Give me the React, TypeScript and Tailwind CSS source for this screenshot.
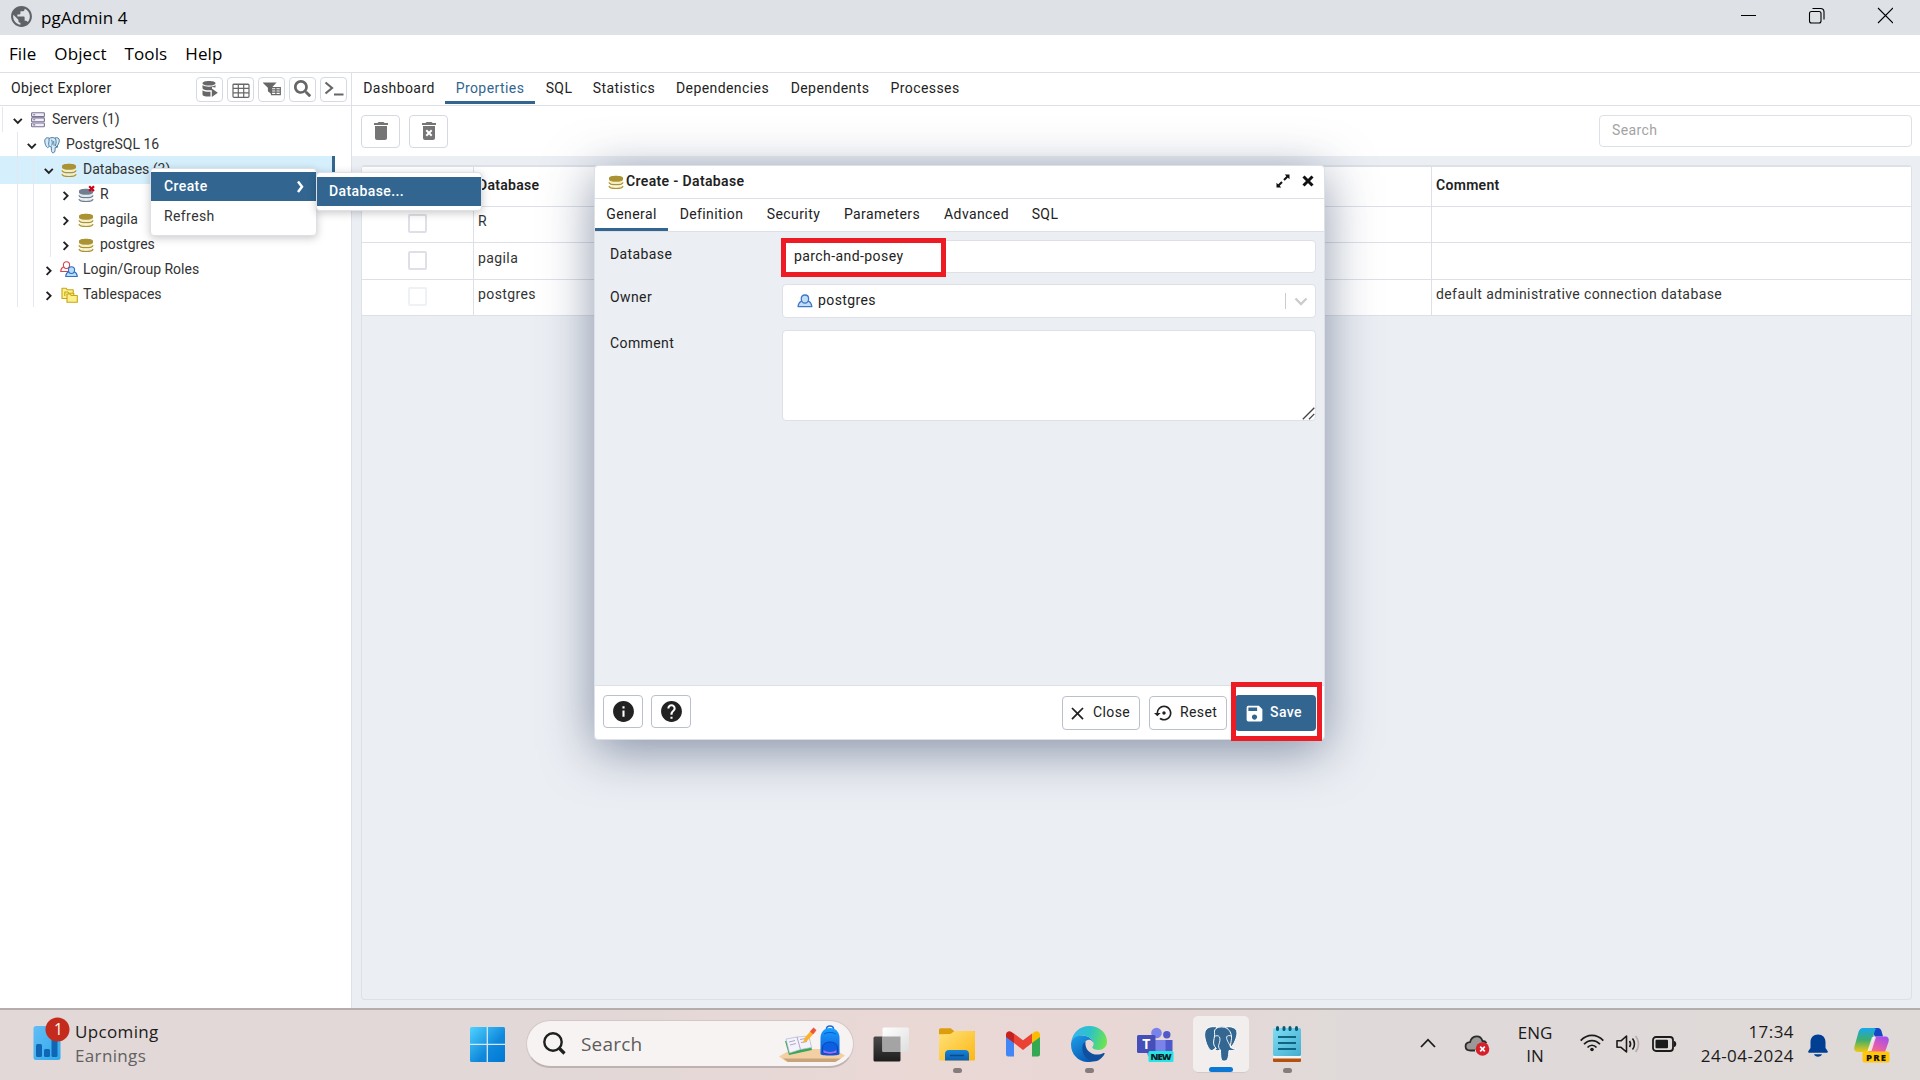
import React from "react";
import { MdDelete, MdHelp, MdInfo, MdPublic, MdSave, MdSettingsBackupRestore, MdClose } from "react-icons/md";
import { FaSearch } from "react-icons/fa";

/* ---------- small icons ---------- */

function DbIcon({ dark = "#ab9333", light = "#f5eec0", size = 16, gone = false }) {
  return (
    <svg className="overflow-visible" width={size} height={size} viewBox="0 0 16 16" fill="none">
      <path d="M1.2 10.8v1.9c0 1.2 3 2.2 6.8 2.2s6.8-1 6.8-2.2v-1.9c-1 1.2-3.600 1.700-6.800 1.700s-5.800-.5-6.800-1.700Z" fill={light} />
      <path d="M1.200 6.600v2.200C1.200 10 4.200 11 8 11s6.800-1 6.800-2.200V6.600C13.800 7.800 11.200 8.300 8 8.300S2.200 7.800 1.200 6.600Z" fill={light} />
      <path d="M.9 8.300C1.300 9.800 4.200 10.700 8 10.700s6.700-.9 7.100-2.400M.9 12.100c.4 1.500 3.300 2.400 7.100 2.400s6.700-.9 7.100-2.400" stroke={dark} strokeWidth="1.200" />
      <path d="M1 4v1.500C1 6.900 4.100 7.800 8 7.800s7-.9 7-2.300V4c0-1.400-3.100-2.300-7-2.300S1 2.600 1 4Z" fill={dark} />
      {gone && <path d="m11.200-.8 4.800 4.800m0-4.800-4.800 4.800" stroke="#d0021b" strokeWidth="2.200" />}
    </svg>
  );
}

function ServersIcon() {
  return (
    <svg width="16" height="16" viewBox="0 0 16 16" fill="none" stroke="#7a7194" strokeWidth="1.100">
      <rect x="1.600" y=".8" width="12.800" height="3.800" rx=".8" fill="#f0eef6" />
      <rect x="1.600" y="5.900" width="12.800" height="3.800" rx=".8" fill="#f0eef6" />
      <rect x="1.600" y="11" width="12.800" height="3.800" rx=".8" fill="#f0eef6" />
      <path d="M3.200 2.700h2M3.200 7.800h2M3.200 12.900h2" />
    </svg>
  );
}

function ElephantIcon() {
  return (
    <svg width="17" height="18" viewBox="0 0 17 18" fill="#d3eaf8" stroke="#336791" strokeWidth=".9" strokeLinejoin="round">
      <path d="M5.500 1.800C3.500.6.8 1.600.8 4.600c0 3 1.700 7.200 3.200 7.200.9 0 1.500-1.400 1.500-1.400" />
      <path d="M11.600 1.600c2.200-1 4.700 0 4.700 2.500 0 2.600-1.900 6.200-3.300 6.800" />
      <path d="M5.300 2.200C7 .8 10.200.7 12 2c1.200 2.200 1 5 .3 7-.5 1.500 1.200 2 2.600 1.700-.8 1-2.300 1.200-3 .9 0 2.600-.2 5.300-1.600 5.600-1.700.4-2.300-.8-2.400-2.500l-.2-4c-1.500.4-2.600-.5-2.700-2.500-.1-2 .7-3 .3-6Z" />
      <path d="M8 3.500c1 1.700 1 4 .2 6M10.400 4.800c-.5 1.500.5 3.200.3 5" fill="none" />
    </svg>
  );
}

function PersonShape({ x, y, fill, stroke }: { x: number; y: number; fill: string; stroke: string }) {
  return (
    <g transform={`translate(${x} ${y})`} fill={fill} stroke={stroke} strokeWidth="1.100" strokeLinejoin="round">
      <path d="M3.800 5.800C2 6.400.9 8 .7 10.500h11.600c-.2-2.500-1.300-4.100-3.100-4.700" />
      <path d="M6.500.7c2 0 3.100 1.200 3.100 3.100 0 2-1.300 3.700-3.100 3.700S3.400 5.800 3.400 3.800C3.400 1.900 4.500.7 6.500.7Z" />
    </g>
  );
}

function RolesIcon() {
  return (
    <svg className="shrink-0" width="18" height="17" viewBox="0 0 18 17">
      <PersonShape x={0} y={0} fill="#fff" stroke="#d0454c" />
      <PersonShape x={5} y={5} fill="#b7dcf5" stroke="#2f6fc4" />
    </svg>
  );
}

function UserIcon() {
  return (
    <svg width="16" height="14" viewBox="0 0 13.500 11.500">
      <PersonShape x={0.200} y={0} fill="#c3def4" stroke="#3c78c8" />
    </svg>
  );
}

function TablespaceIcon() {
  return (
    <svg className="shrink-0" width="17" height="16" viewBox="0 0 17 16" fill="#fbf08b" stroke="#c9a415" strokeWidth="1.100" strokeLinejoin="round">
      <path d="M1 11.500V1.200h4.200l1 1.500h6v8.800Z" />
      <path d="M3.800 9V5h3l1 1.200h5V9" />
      <path d="M6 15.200V7h3.300l1 1.500h6v6.700Z" />
    </svg>
  );
}

function Chevron({ open = false }: { open?: boolean }) {
  return (
    <svg width="16" height="16" viewBox="0 0 16 16" fill="none" stroke="#222" strokeWidth="1.900">
      {open ? <path d="m3.800 5.800 4 4 4-4" /> : <path d="m5.600 3.800 4 4-4 4" />}
    </svg>
  );
}

function TrashX() {
  return (
    <svg width="24" height="24" viewBox="0 0 24 24" fill="#757575">
      <path d="M6 19c0 1.100.9 2 2 2h8c1.100 0 2-.9 2-2V7H6ZM19 4h-3.500l-1-1h-5l-1 1H5v2h14Z" />
      <path d="m9.300 11.300 5.400 5.400m0-5.400-5.400 5.400" stroke="#fff" strokeWidth="2" />
    </svg>
  );
}

/* ---------- object explorer ---------- */

const headerIcons = [
  <svg width="18" height="18" viewBox="0 0 18 18" fill="#666">
    <path d="M1.500 3.200C1.500 1.800 4.500 1 8 1s6.500.8 6.500 2.200S11.500 5.500 8 5.500 1.500 4.600 1.500 3.200Z" />
    <path d="M1.500 5c1.200 1.200 3.600 1.700 6.500 1.700s5.300-.5 6.500-1.700v2.400L11 6.900v3.300c-4.500.5-9.500-.1-9.500-2.200ZM1.500 10.300C3 11.500 6 12 9.500 11.800v4.600c-4.500.4-8-.4-8-2Z" />
    <path d="m10.800 8.500 6 4.200-6 4.300Z" />
  </svg>,
  <svg className="mt-px" width="18" height="16" viewBox="0 0 18 16" fill="none" stroke="#666" strokeWidth="1.200">
    <rect x="1" y="2" width="16" height="13.300" rx="1" />
    <path d="M1 6.300h16M1 10.800h16M6.300 2v13M11.700 2v13M1 2.500h16" />
  </svg>,
  <svg width="18" height="16" viewBox="0 0 18 16" fill="none" stroke="#666" strokeWidth="1.200">
    <path d="M.8 2h11.400L8 6.500V12L5.500 10V6.500Z" fill="#666" />
    <path d="M8.500 6.600h8.800v7H8.500ZM8.500 8.800h8.800M8.500 11.200h8.800M12.900 6.600v7" fill="#fff" />
  </svg>,
  <FaSearch className="mb-[2px]" size={17} color="#666" />,
  <svg width="20" height="16" viewBox="0 0 20 16" fill="none" stroke="#666" strokeWidth="2.200">
    <path d="m1.500 1.500 6.500 5.500-6.500 5.500M10 13.500h9.500" />
  </svg>,
];

type Node = { label: string; level: number; icon: React.ReactNode; open?: boolean; selected?: boolean };

const nodes: Node[] = [
  { label: "Servers (1)", level: 0, icon: <ServersIcon />, open: true },
  { label: "PostgreSQL 16", level: 1, icon: <ElephantIcon />, open: true },
  { label: "Databases (3)", level: 2, icon: <DbIcon />, open: true, selected: true },
  { label: "R", level: 3, icon: <DbIcon dark="#6f7f8f" light="#e3e8ee" gone /> },
  { label: "pagila", level: 3, icon: <DbIcon /> },
  { label: "postgres", level: 3, icon: <DbIcon /> },
  { label: "Login/Group Roles", level: 2, icon: <RolesIcon /> },
  { label: "Tablespaces", level: 2, icon: <TablespaceIcon /> },
];

const indents = ["pl-[10px]", "pl-[24px]", "pl-[41px]", "pl-[58px]"];
const guides = ["left-[2px]", "left-[17px]", "left-[33px]", "left-[50px]"];

function Tree() {
  return (
    <div className="flex flex-col pt-px">
      {nodes.map((n) => (
        <div
          key={n.label}
          className={`relative flex items-center gap-[5px] ${indents[n.level]} ${
            n.selected ? "z-0 -mt-px -mb-[2px] mr-4 h-[28px] border-r-[3px] border-[#326690] bg-[#d6effc] pb-px" : "h-[25px]"
          }`}
        >
          {guides.slice(n.level === 0 ? 0 : 1, n.level + 1).map((g) => (
            <span key={g} className={`absolute inset-y-0 w-px bg-[#e4e7ee] ${g}`} />
          ))}
          <span className="relative top-px shrink-0"><Chevron open={n.open} /></span>
          <span className="-ml-px flex w-4 shrink-0 justify-center overflow-visible">{n.icon}</span>
          <span className="pl-px text-[14px] whitespace-nowrap text-[#333]">{n.label}</span>
        </div>
      ))}
    </div>
  );
}

function ObjectExplorer() {
  return (
    <div className="flex w-[352px] shrink-0 flex-col border-r border-[#dde0e6] bg-white">
      <div className="flex h-[33px] items-center justify-between border-b border-[#dde0e6] pr-1 pl-[11px]">
        <span className="pb-px text-[14px] tracking-[0.4px]">Object Explorer</span>
        <div className="flex gap-1">
          {headerIcons.map((icon, i) => (
            <span key={i} className="flex h-[25px] w-[27px] items-center justify-center rounded-[4px] border border-[#d5d9e3]">
              {icon}
            </span>
          ))}
        </div>
      </div>
      <Tree />
    </div>
  );
}

/* ---------- main panel ---------- */

const mainTabs = [
  ["Dashboard", "w-[93px] pl-px"],
  ["Properties", "w-[90px] text-[#326690] border-b-[3px] border-[#326690] pt-[3px]"],
  ["SQL", "w-[48px]"],
  ["Statistics", "w-[82px]"],
  ["Dependencies", "w-[115px]"],
  ["Dependents", "w-[100px]"],
  ["Processes", "w-[90px]"],
];

const rows = [
  { name: "R", comment: "", h: "h-[36px]", pad: "pb-[7px]", box: "border-[#dde0e6]" },
  { name: "pagila", comment: "", h: "h-[37px]", pad: "pb-[6px]", box: "border-[#dde0e6]" },
  { name: "postgres", comment: "default administrative connection database", h: "h-[36px]", pad: "pb-[7px]", box: "border-[#eef1f5]" },
];

function PropertiesPanel() {
  return (
    <div className="flex min-w-0 flex-1 flex-col bg-[#ebeef3]">
      <div className="flex h-[33px] border-b border-[#dde0e6] bg-white pb-px">
        {mainTabs.map(([label, cls]) => (
          <div key={label} className={`flex h-[31px] items-center justify-center text-[14px] tracking-[0.42px] ${cls}`}>
            {label}
          </div>
        ))}
      </div>
      <div className="flex h-[50px] items-center justify-between bg-white pr-[8px] pl-[9px]">
        <div className="flex gap-[9px]">
          <span className="flex h-[33px] w-[39px] items-center justify-center rounded-[4px] border border-[#d5d9e3]">
            <MdDelete size={24} color="#757575" />
          </span>
          <span className="flex h-[33px] w-[39px] items-center justify-center rounded-[4px] border border-[#d5d9e3]">
            <TrashX />
          </span>
        </div>
        <div className="flex h-[32px] w-[313px] items-center rounded-[4px] border border-[#dde0e6] pb-px pl-3 text-[14px] tracking-[0.4px] text-[#a3a3a3]">
          Search
        </div>
      </div>
      <div className="mt-[9px] mr-2 mb-2 ml-[9px] flex-1 rounded-[4px] border border-t-2 border-[#dde0e6] text-[14px]">
        <div className="flex h-[40px] border-b border-[#dde0e6] bg-white font-semibold">
          <div className="w-[112px] border-r border-[#dde0e6]" />
          <div className="flex w-[958px] items-center border-r border-[#dde0e6] pb-[3px] pl-1 tracking-[0.3px]">Database</div>
          <div className="flex items-center pb-[3px] pl-1 tracking-[0.3px]">Comment</div>
        </div>
        {rows.map((r) => (
          <div key={r.name} className={`flex border-b border-[#dde0e6] bg-white tracking-[0.4px] text-[#333] ${r.h}`}>
            <div className="flex w-[112px] items-center justify-center border-r border-[#dde0e6] pb-[2px]">
              <span className={`h-[19px] w-[19px] rounded-[2px] border-2 ${r.box}`} />
            </div>
            <div className={`flex w-[958px] items-center border-r border-[#dde0e6] pl-1 ${r.pad}`}>{r.name}</div>
            <div className={`flex items-center pl-1 ${r.pad}`}>{r.comment}</div>
          </div>
        ))}
      </div>
    </div>
  );
}

/* ---------- context menus ---------- */

function ContextMenus() {
  return (
    <>
      <div className="absolute top-[168px] left-[150px] z-10 h-[68px] w-[167px] rounded-[4px] border border-[#dde0e6] bg-white pt-[3px] text-[14px] tracking-[0.4px] shadow-[0_2px_8px_rgba(0,0,0,0.22)]">
        <div className="flex h-[29px] items-center justify-between bg-[#326690] pr-[11px] pl-[13px] font-medium text-white">
          <span className="pb-px">Create</span>
          <svg width="9" height="14" viewBox="0 0 9 14" fill="none" stroke="#fff" strokeWidth="2.500"><path d="m2 1.500 4 5.300-4 5.300" /></svg>
        </div>
        <div className="flex h-[29px] items-center pt-[2px] pl-[13px] text-[#333]">Refresh</div>
      </div>
      <div className="absolute top-[172px] left-[316px] z-10 h-[39px] w-[166px] rounded-[4px] border border-[#dde0e6] bg-white pt-1 text-[14px] tracking-[0.4px] shadow-[0_2px_8px_rgba(0,0,0,0.22)]">
        <div className="flex h-[29px] items-center bg-[#326690] pb-px pl-3 font-medium text-white">Database...</div>
      </div>
    </>
  );
}

/* ---------- dialog ---------- */

const dialogTabs = [
  ["General", "w-[73px] border-b-[3px] border-[#326690] pt-[3px]"],
  ["Definition", "w-[87px]"],
  ["Security", "w-[77px]"],
  ["Parameters", "w-[100px]"],
  ["Advanced", "w-[89px]"],
  ["SQL", "w-[48px]"],
];

function Dialog() {
  return (
    <div className="absolute top-[165px] left-[594px] z-20 flex h-[575px] w-[731px] flex-col rounded-[4px] border border-[#dde0e6] bg-white text-[14px] tracking-[0.4px] text-[#222] shadow-[0_10px_50px_rgba(50,65,100,0.55)]">
      <div className="flex h-[33px] items-center border-b border-[#dde0e6] pr-[10px] pl-[13px]">
        <DbIcon size={16} />
        <span className="flex-1 pb-[2px] pl-[2px] font-semibold tracking-[0.35px]">Create - Database</span>
        <svg className="mb-[3px]" width="14" height="14" viewBox="0 0 14 14" fill="#111" stroke="#111">
          <path d="M8.700.5h4.800v4.800ZM.5 8.700v4.800h4.800Z" stroke="none" />
          <path d="M12 2 8 6M6 8l-4 4" strokeWidth="2" />
        </svg>
        <svg className="mb-[3px] ml-3" width="12" height="12" viewBox="0 0 12 12" stroke="#111" strokeWidth="3"><path d="m1.500 1.500 9 9m0-9-9 9" /></svg>
      </div>
      <div className="flex h-[33px] border-b border-[#dde0e6]">
        {dialogTabs.map(([label, cls]) => (
          <div key={label} className={`flex h-[32px] items-center justify-center pb-[2px] ${cls}`}>{label}</div>
        ))}
      </div>
      <div className="flex flex-1 flex-col bg-[#ebeef3] pt-[8px] pr-2 pl-[15px]">
        <div className="flex">
          <span className="w-[172px] pt-[4px]">Database</span>
          <div className="relative flex h-[33px] flex-1 items-center rounded-[4px] border border-[#dde0e6] bg-white pb-px pl-[11px] tracking-[0.42px]">
            parch-and-posey
            <span className="absolute -top-[3px] -left-[2px] h-[39px] w-[165px] border-[5px] border-[#ed1c24]" />
          </div>
        </div>
        <div className="mt-[11px] flex">
          <span className="w-[172px] pt-[3px]">Owner</span>
          <div className="flex h-[34px] flex-1 items-center rounded-[4px] border border-[#dde0e6] bg-white pr-[7px] pl-[14px]">
            <UserIcon />
            <span className="flex-1 pb-px pl-[5px]">postgres</span>
            <span className="h-4 w-px bg-[#ccc]" />
            <svg className="mt-px ml-2" width="14" height="9" viewBox="0 0 14 9" fill="none" stroke="#ccc" strokeWidth="2.400"><path d="m1.500 1.500 5.500 5.500 5.500-5.500" /></svg>
          </div>
        </div>
        <div className="mt-[12px] flex">
          <span className="w-[172px] pt-[3px]">Comment</span>
          <div className="flex h-[91px] flex-1 items-end justify-end rounded-[4px] border border-[#dde0e6] bg-white">
            <svg width="13" height="13" viewBox="0 0 13 13" stroke="#444" strokeWidth="1.300"><path d="M.8 12.200 12.300.7M7 12.200l5.300-5.300" /></svg>
          </div>
        </div>
      </div>
      <div className="flex h-[54px] items-start border-t border-[#dde0e6] pl-2">
        <span className="mt-[9px] flex h-[33px] w-[40px] items-center justify-center rounded-[4px] border border-[#bac1cd]"><MdInfo size={25} /></span>
        <span className="mt-[9px] ml-2 flex h-[33px] w-[40px] items-center justify-center rounded-[4px] border border-[#bac1cd]"><MdHelp size={25} /></span>
        <span className="mt-[10px] mr-[9px] ml-auto flex h-[34px] w-[78px] items-center rounded-[4px] border border-[#bac1cd] pl-1">
          <MdClose size={21} /><span className="pb-[2px] pl-[5px]">Close</span>
        </span>
        <span className="mt-[10px] mr-[8px] flex h-[34px] w-[78px] items-center rounded-[4px] border border-[#bac1cd] pl-1">
          <MdSettingsBackupRestore size={20} /><span className="pb-[2px] pl-[6px]">Reset</span>
        </span>
        <span className="relative mt-[9px] mr-[8px] flex h-[36px] w-[81px] items-center rounded-[4px] bg-[#326690] pl-[9px] font-medium text-white">
          <MdSave size={21} /><span className="pb-[2px] pl-[5px]">Save</span>
          <span className="absolute -top-[13px] -left-1 h-[59px] w-[91px] border-[5px] border-[#ed1c24]" />
        </span>
      </div>
    </div>
  );
}

/* ---------- taskbar ---------- */

function WidgetIcon() {
  return (
    <svg width="37" height="44" viewBox="0 0 37 44">
      <defs>
        <linearGradient id="wg" x1="0" y1="0" x2="1" y2="1"><stop stopColor="#63bdf5" /><stop offset="1" stopColor="#2fa9ec" /></linearGradient>
      </defs>
      <rect x="0.500" y="9" width="27" height="34" rx="2.500" fill="url(#wg)" />
      <rect x="3" y="27" width="6" height="13" rx="1.500" fill="#0f66b4" />
      <rect x="11" y="32" width="6" height="8" rx="1.500" fill="#0f66b4" />
      <rect x="18.500" y="22" width="6" height="18" rx="1.500" fill="#0f66b4" />
      <circle cx="24.500" cy="12.500" r="12" fill="#c42b1c" />
      <text x="25.500" y="18" textAnchor="middle" fontSize="15.500" fontFamily="Open Sans" fill="#fff">1</text>
    </svg>
  );
}

function StartIcon() {
  return (
    <svg width="35" height="35" viewBox="0 0 35 35">
      <defs>
        <linearGradient id="win" x1="0" y1="0" x2="1" y2="1"><stop stopColor="#4fd3ff" /><stop offset=".6" stopColor="#0f88dc" /><stop offset="1" stopColor="#0078d4" /></linearGradient>
      </defs>
      <rect width="35" height="35" rx="1.500" fill="url(#win)" />
      <path d="M17.300 0v35M0 17.300h35" stroke="#d8e6f2" strokeWidth="1.300" />
    </svg>
  );
}

function SchoolArt() {
  return (
    <svg width="68" height="38" viewBox="0 0 68 38">
      <defs>
        <linearGradient id="bag" x1="0" y1="0" x2="0" y2="1"><stop stopColor="#18a0ff" /><stop offset="1" stopColor="#1053d8" /></linearGradient>
      </defs>
      <path d="M1 31.500 14 24h42l11 6.500-9 6.500H9Z" fill="#f3cfa4" />
      <path d="M5 33.500h58L57 37H10Z" fill="#c9a37a" />
      <path d="m7 16 4 14 23-5-3-12Z" fill="#35a853" />
      <path d="m8 14 11-2 12-1 2.500 11.500-11 2L11.500 28Z" fill="#f4f3fb" stroke="#b7b3d5" strokeWidth=".7" />
      <path d="m19 12 3.500 12.500M11 17l6-1.500M12 20l6-1.500M22 14.500l6-1M23 17.500l6-1" stroke="#a39fc2" strokeWidth=".9" />
      <path d="m25 18 1.500-5L34 4.500l3 2.700L29 16Z" fill="#fbb32d" />
      <path d="m32 6.500 3.500-4 3 2.700-3.500 4Z" fill="#f0533d" />
      <path d="M48.500 4c0-4 7-4 7 0" stroke="#1a6de0" strokeWidth="1.600" fill="none" />
      <path d="M42.500 29V13c0-6 4-10 9.500-10s9.500 4 9.500 10v16c0 2-19 2-19 0Z" fill="url(#bag)" />
      <path d="M46 9c3-2 9-2 12 0" stroke="#0a59cf" fill="none" />
      <path d="M44.500 27v-4c0-8 15-8 15 0v4c0 2.500-15 2.500-15 0Z" fill="#0b5fe0" stroke="#0a3fb0" strokeWidth=".8" />
      <path d="M45.500 25c3 2.500 10 2.500 13 0v2.500c-3 1.500-10 1.500-13 0Z" fill="#a56bf0" />
    </svg>
  );
}

function TaskViewIcon() {
  return (
    <svg width="37" height="35" viewBox="0 0 37 35">
      <defs>
        <linearGradient id="tv" x1="0" y1="0" x2="0" y2="1"><stop stopColor="#4a4a4a" /><stop offset="1" stopColor="#1d1d1d" /></linearGradient>
        <linearGradient id="tw" x1="0" y1="0" x2="1" y2="1"><stop stopColor="#ffffff" /><stop offset="1" stopColor="#dedede" /></linearGradient>
      </defs>
      <rect x="0.500" y="9.500" width="27" height="25" rx="1.500" fill="url(#tv)" />
      <rect x="9.500" y=".5" width="26.500" height="24.500" rx="1.500" fill="url(#tw)" />
      <path d="M9.500 9.500H27.500V25H9.500Z" fill="#a4a4a4" />
    </svg>
  );
}

function FolderIcon() {
  return (
    <svg width="36" height="36" viewBox="0 0 36 36">
      <defs>
        <linearGradient id="fo" x1="0" y1="0" x2="1" y2="1"><stop stopColor="#ffe27a" /><stop offset="1" stopColor="#fcb714" /></linearGradient>
        <linearGradient id="fb" x1="0" y1="0" x2="0" y2="1"><stop stopColor="#1583d8" /><stop offset="1" stopColor="#0f5fae" /></linearGradient>
      </defs>
      <path d="M0 4c0-1 .6-1.800 1.800-1.800h10L15 5H34.500c1 0 1.500.6 1.500 1.500V12H0Z" fill="#dc9e0d" />
      <path d="M0 9.500 0 8.200 11.500 8 15.500 5H34.500c1 0 1.500.6 1.500 1.500V33c0 1-.6 1.600-1.500 1.600H1.500C.6 34.600 0 34 0 33Z" fill="url(#fo)" />
      <path d="M6 34.600V28c0-2.500 1.500-4 4-4h16c2.500 0 4 1.500 4 4v6.600Z" fill="url(#fb)" />
      <path d="M11 29.500h14" stroke="#0a4a8c" strokeWidth="1.500" />
    </svg>
  );
}

function GmailIcon() {
  return (
    <svg width="34" height="26" viewBox="0 0 34 26">
      <path d="M0 4v19.500c0 1.200 1 2 2.200 2H8V10Z" fill="#4285f4" />
      <path d="M34 4v19.500c0 1.200-1 2-2.200 2H26V10Z" fill="#34a853" />
      <path d="m8 2.500 9 6.800 9-6.800V12l-9 7-9-7Z" fill="#ea4335" />
      <path d="M0 3.500C0 .4 3.400-.8 5.600 1L8 2.700V12L0 6Z" fill="#c5221f" />
      <path d="M34 3.500C34 .4 30.600-.8 28.400 1L26 2.700V12l8-6Z" fill="#fbbc04" />
    </svg>
  );
}

function EdgeIcon() {
  return (
    <svg width="36" height="36" viewBox="0 0 36 36">
      <defs>
        <linearGradient id="ea" x1="0" y1=".3" x2="1" y2=".5"><stop stopColor="#35b5ee" /><stop offset=".5" stopColor="#2cc3c9" /><stop offset="1" stopColor="#6ce44f" /></linearGradient>
        <linearGradient id="eb" x1="0" y1="0" x2=".6" y2="1"><stop stopColor="#1ca0ea" /><stop offset="1" stopColor="#0a5bb5" /></linearGradient>
      </defs>
      <path d="M.3 16C1.500 6.500 9 0 18 0c11 0 18 7.500 18 15.500 0 5.500-4 8.500-8.500 8.500-5 0-6.500-2-6-3.200.8-1.200 1.500-2.300 1-4.300C21 11.500 15 9 10 9.500 5 10 2 12.500.3 16Z" fill="url(#ea)" />
      <path d="M.1 17C1 12 5.500 9.300 11 9.500c6.500.2 11.500 4 11.500 8.500 0-3-4-5.500-7-3.500-5 3-4.500 14 6.500 21C10 38.500-1 29.500.1 17Z" fill="url(#eb)" />
      <path d="M14.500 15.200c-6 4.300-3.500 17.300 7.500 20.300 5 .2 9.500-3.500 11.500-7.500.4-.9-.3-1.300-1-.9C24 31.500 13 26 14.500 15.200Z" fill="#0f4f9e" />
    </svg>
  );
}

function TeamsIcon() {
  return (
    <svg width="37" height="36" viewBox="0 0 37 36">
      <circle cx="19.500" cy="7" r="5.300" fill="#7b83eb" />
      <circle cx="29.800" cy="8.800" r="3.700" fill="#5059c9" />
      <path d="M24 14h11.500v10c0 6-10 7-11.500 1Z" fill="#5059c9" />
      <path d="M10 14h18.500v13c0 9-17 9-18.500 0Z" fill="#7b83eb" />
      <rect x="0" y="9" width="18.500" height="18" rx="1.500" fill="#464eb8" />
      <text x="9.300" y="23" textAnchor="middle" fontFamily="Open Sans" fontWeight="700" fontSize="14" fill="#fff">T</text>
      <rect x="11.500" y="25" width="25" height="11" rx="1.500" fill="#25e3e6" />
      <text x="24" y="34" textAnchor="middle" fontFamily="Open Sans" fontWeight="800" fontSize="9.500" textLength="21" fill="#08201f">NEW</text>
    </svg>
  );
}

function PostgresIcon() {
  return (
    <svg width="34" height="36" viewBox="0 0 34 36" fill="#336791" stroke="#fff" strokeWidth="1" strokeLinejoin="round" strokeLinecap="round">
      <path d="M13 1C9 .2 4 .5 1.800 4-.3 7.500.8 13 2.500 17.500c1.200 3.300 3 7 5.300 7 1.700 0 2.700-1.500 4-3.200Z" />
      <path d="M21 1.200c4-1.200 9.500-.5 11.500 3.300 1.500 3.500-.8 9.500-3 13.500l-3.500 4.500L21 19Z" />
      <path d="M12.500 2c3-1.600 7.500-1.500 10.500.3 3.500 2.700 4.800 6.500 4.500 10.200-.2 3-1.200 5.500-1 8.500.7 1.700 3.200 1.800 5.700 1.300-1.700 2.200-4.700 2.700-7.200 2.200-.2 3.500-.5 7-1.500 8.800-1.200 2.200-5.500 2.600-6.300-.3-.7-2.500-.4-6-.9-9-1.300.8-4 1-6.500.1 1.700-.4 2.500-.8 2.400-2C10 20.500 9.300 18 9.700 15c.5-3.500 1.200-5.500.8-8.500-.2-2 .5-3.500 2-4.500Z" />
      <path d="M10.500 10.500c1.500-1.200 4-1.200 5 .5.900 2 .3 5-.6 7.300-.8 2-.3 3.700 1.300 5.700M27.300 10c-2-.8-4-.5-4.600.8-.5 1.700.7 4 1.800 6 .9 1.700 1.500 2.500 2 4.200" fill="none" strokeWidth=".9" />
    </svg>
  );
}

function NotepadIcon() {
  return (
    <svg width="28" height="36" viewBox="0 0 28 36">
      <defs>
        <linearGradient id="np" x1="0" y1="0" x2="1" y2="1"><stop stopColor="#7fdcf3" /><stop offset="1" stopColor="#43aecf" /></linearGradient>
      </defs>
      <rect y="31" width="28" height="5" rx="1" fill="#b4510f" />
      <rect y="26" width="28" height="6.500" fill="#f4f4f4" />
      <rect y="2" width="28" height="28" rx="1.500" fill="url(#np)" />
      <path d="M5 11h18M5 17h18M5 23h18" stroke="#0b6583" strokeWidth="2" />
      <path d="M4.500 1.500v2M11 1.500v2M17 1.500v2M23.500 1.500v2" stroke="#0b5a75" strokeWidth="3" strokeLinecap="round" />
    </svg>
  );
}

function CopilotIcon() {
  return (
    <svg width="36" height="36" viewBox="0 0 36 36">
      <defs>
        <linearGradient id="ca" x1="0" y1="0" x2="0" y2="1"><stop stopColor="#17a7ee" /><stop offset=".5" stopColor="#3fae6d" /><stop offset="1" stopColor="#f2c811" /></linearGradient>
        <linearGradient id="cb" x1=".8" y1="0" x2=".2" y2="1"><stop stopColor="#a44df0" /><stop offset=".6" stopColor="#ec5fa0" /><stop offset="1" stopColor="#fb8a4a" /></linearGradient>
      </defs>
      <path d="M16 1h8c2 0 3 1.500 3.500 3l1.500 5.500h-8Z" fill="#1546c4" />
      <path d="M21 9.500h10c3 0 4.500 2 3.500 5.500L31 25c-1 2-2 3-5 3H8c6 0 7-4 8-8Z" fill="url(#cb)" />
      <path d="M9 1h10c1.500 0 2.500.5 3 1-2 2-3 10-5 17-1 4-2.500 6-6 6H4c-3 0-4.500-2-3.500-5.500L4.500 5C5.300 2.500 7 1 9 1Z" fill="url(#ca)" />
      <path d="M18 10h4l-4.500 14h-4Z" fill="#fff" fillOpacity=".75" />
      <rect x="8.500" y="24.500" width="27" height="11" rx="2" fill="#ffc60a" />
      <text x="22" y="33.500" textAnchor="middle" fontFamily="Open Sans" fontWeight="800" fontSize="9.500" textLength="20" fill="#1c1500">PRE</text>
    </svg>
  );
}

function TaskCell({ children, dot = false }: { children: React.ReactNode; dot?: boolean }) {
  return (
    <div className="flex w-[66px] flex-col items-center pt-4">
      <div className="flex h-[36px] items-center">{children}</div>
      {dot && <span className="mt-[6px] h-[5px] w-[9px] rounded-full bg-[#857c7b]" />}
    </div>
  );
}

function Taskbar() {
  return (
    <div className="flex h-[72px] border-t-2 border-[#b5adac] bg-[linear-gradient(90deg,#e1d8d7_0%,#e2d8d7_30%,#ead8d5_48%,#e8d7d5_58%,#dfdad9_70%,#dfd9d8_100%)] font-['Open_Sans',sans-serif] text-[17px] text-[#1b1b1b]">
      <div className="flex w-[454px] pl-[33px]">
        <div className="pt-[7px]"><WidgetIcon /></div>
        <div className="flex flex-col pt-[10px] pl-[5px] leading-6 tracking-[0.35px]">
          <span>Upcoming</span>
          <span className="text-[#626060]">Earnings</span>
        </div>
      </div>
      <div className="flex w-[66px] justify-center pt-[17px]"><StartIcon /></div>
      <div className="mt-[10px] mr-1 ml-[6px] flex h-[48px] w-[328px] items-center rounded-full border border-b-2 border-[#d3c8c7] border-b-[#bfb3b2] bg-[#f7f3f2] pr-[7px] pl-4">
        <svg width="23" height="23" viewBox="0 0 23 23" fill="none" stroke="#1f1f1f" strokeWidth="2.400"><circle cx="10" cy="10" r="8.700" /><path d="m16 16 5.500 5.500" strokeWidth="3.200" /></svg>
        <span className="flex-1 pt-[2px] pl-[15px] text-[19px] tracking-[0.2px] text-[#5e5c5b]">Search</span>
        <SchoolArt />
      </div>
      <TaskCell><TaskViewIcon /></TaskCell>
      <TaskCell dot><FolderIcon /></TaskCell>
      <TaskCell><GmailIcon /></TaskCell>
      <TaskCell dot><EdgeIcon /></TaskCell>
      <TaskCell><TeamsIcon /></TaskCell>
      <div className="mx-[5px] mt-[6px] flex h-[57px] w-[56px] flex-col items-center justify-between rounded-[5px] border-b border-[#d2cac9] bg-[#f2eeed] pt-[10px]">
        <PostgresIcon />
        <span className="h-[5px] w-[24px] rounded-full bg-[#0a78d4]" />
      </div>
      <TaskCell dot><NotepadIcon /></TaskCell>
      <div className="flex flex-1 items-center justify-end pr-[30px] pb-1">
        <svg width="16" height="10" viewBox="0 0 16 10" fill="none" stroke="#1b1b1b" strokeWidth="1.800"><path d="m1 9 7-7.300L15 9" /></svg>
        <svg className="mt-[3px] ml-[28px]" width="26" height="22" viewBox="0 0 26 22">
          <path d="M6 16.500c-6 0-6-8 0-8C7.500 1 17 1 18.500 7c5 0 6 5 4 7.500L8 16.500Z" fill="#9b9897" />
          <path d="M11 16.500H6.500c-6.500 0-6.500-8-.5-8.300C8 1 16.500.5 18.500 7c2 0 3 .6 4 2" fill="none" stroke="#2b2b2b" strokeWidth="1.800" />
          <circle cx="18.500" cy="15" r="6.800" fill="#d6202b" />
          <path d="m16.200 12.700 4.600 4.600m0-4.600-4.600 4.600" stroke="#fff" strokeWidth="1.700" />
        </svg>
        <div className="ml-[27px] flex w-[36px] flex-col items-center pt-px leading-[23px]"><span>ENG</span><span>IN</span></div>
        <svg className="ml-[27px]" width="24" height="18" viewBox="0 0 24 18" fill="none" stroke="#1b1b1b" strokeWidth="1.700">
          <path d="M.7 6.700c6.500-7 16-7 22.600 0M4 10.300c4.500-5 11.500-5 16 0M7.500 13.500c2.500-3 6.500-3 9 0" />
          <circle cx="12" cy="15.500" r="1.800" fill="#1b1b1b" stroke="none" />
        </svg>
        <svg className="mt-px ml-3" width="24" height="20" viewBox="0 0 24 20" fill="none" stroke="#1b1b1b" strokeWidth="1.600">
          <path d="M1 6.800h4L10.500 2v16L5 13.300H1Z" strokeLinejoin="round" />
          <path d="M13.500 7c1.300 1.800 1.300 4.200 0 6M16.500 4.500c2.600 3.200 2.600 7.800 0 11" />
          <path d="M19.500 2c4 4.600 4 11.400 0 16" stroke="#b4adac" />
        </svg>
        <svg className="mt-px ml-3" width="25" height="16" viewBox="0 0 25 16">
          <rect x="1" y="1" width="20" height="14" rx="3" fill="none" stroke="#1b1b1b" strokeWidth="1.800" />
          <rect x="3.500" y="3.700" width="12.500" height="8.600" rx="1" fill="#1b1b1b" />
          <path d="M22 5c3 0 3 6 0 6Z" fill="#1b1b1b" />
        </svg>
        <div className="ml-[22px] flex w-[95px] flex-col items-end pt-px leading-6 tracking-[0.45px] whitespace-nowrap"><span>17:34</span><span>24-04-2024</span></div>
        <svg className="mt-[5px] ml-[14px]" width="20" height="24" viewBox="0 0 20 24" fill="#003f92">
          <path d="M10 .5c-4.500 0-7.500 3-7.500 7.500v6L.4 17c-.5.9 0 1.700 1 1.700h17.200c1 0 1.500-.8 1-1.700l-2.100-3V8c0-4.500-3-7.500-7.500-7.500ZM6 20.300h8c-.8 3.300-7.200 3.300-8 0Z" />
        </svg>
        <span className="mt-[4px] ml-[26px]"><CopilotIcon /></span>
      </div>
    </div>
  );
}

/* ---------- window ---------- */

export default function App() {
  return (
    <div className="relative flex h-[1080px] w-[1920px] flex-col overflow-hidden bg-white font-[Roboto,sans-serif] text-[#222]">
      <div className="flex h-[35px] items-center bg-[#dee1e6] pl-[9px] font-['Open_Sans',sans-serif] text-[17px] text-black">
        <span className="mb-[3px]"><MdPublic size={25} color="#5f6368" /></span>
        <span className="flex-1 pl-[7px] tracking-[0.15px]">pgAdmin 4</span>
        <svg className="mb-1" width="152" height="17" viewBox="0 0 152 17" fill="none" stroke="#000" strokeWidth="1.100">
          <path d="M0 8.500h15M137 1l15 15M152 1l-15 15" />
          <rect x="68.500" y="4.500" width="11.500" height="11.500" rx="2" />
          <path d="M71.500 1.500h8c2 0 3.500 1.500 3.500 3.500v7.500" />
        </svg>
        <span className="w-[27px]" />
      </div>
      <div className="flex h-[38px] items-center gap-[18px] border-b border-[#dde0e6] pl-[9px] font-['Open_Sans',sans-serif] text-[17px] tracking-[0.1px] text-black">
        <span>File</span><span>Object</span><span>Tools</span><span>Help</span>
      </div>
      <div className="flex min-h-0 flex-1">
        <ObjectExplorer />
        <PropertiesPanel />
      </div>
      <Taskbar />
      <ContextMenus />
      <Dialog />
    </div>
  );
}
